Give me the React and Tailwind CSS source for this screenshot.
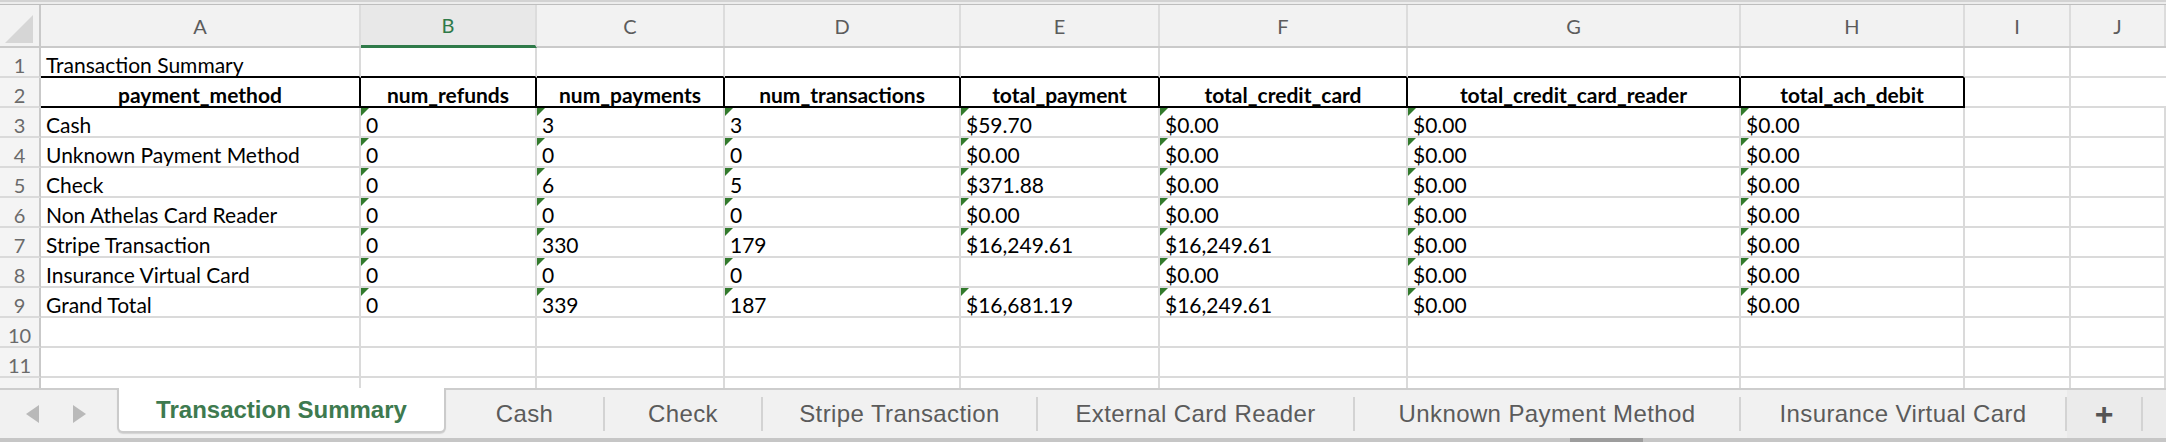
import React from 'react';

const GRID = "grid grid-cols-[41px_320px_176px_188px_236px_199px_248px_333px_224px_106px_1fr]";
const LETTERS = ['A', 'B', 'C', 'D', 'E', 'F', 'G', 'H', 'I', 'J'];
const HEADERS = ['payment_method', 'num_refunds', 'num_payments', 'num_transactions', 'total_payment', 'total_credit_card', 'total_credit_card_reader', 'total_ach_debit'];

// rows 3-9 of the sheet
const ROWS = [
    ['Cash', '0', '3', '3', '$59.70', '$0.00', '$0.00', '$0.00'],
    ['Unknown Payment Method', '0', '0', '0', '$0.00', '$0.00', '$0.00', '$0.00'],
    ['Check', '0', '6', '5', '$371.88', '$0.00', '$0.00', '$0.00'],
    ['Non Athelas Card Reader', '0', '0', '0', '$0.00', '$0.00', '$0.00', '$0.00'],
    ['Stripe Transaction', '0', '330', '179', '$16,249.61', '$16,249.61', '$0.00', '$0.00'],
    ['Insurance Virtual Card', '0', '0', '0', '', '$0.00', '$0.00', '$0.00'],
    ['Grand Total', '0', '339', '187', '$16,681.19', '$16,249.61', '$0.00', '$0.00'],
];

const TABS = [
    { name: 'Cash', w: 'w-[159px]' },
    { name: 'Check', w: 'w-[158px]' },
    { name: 'Stripe Transaction', w: 'w-[275px]' },
    { name: 'External Card Reader', w: 'w-[317px]' },
    { name: 'Unknown Payment Method', w: 'w-[386px]' },
    { name: 'Insurance Virtual Card', w: 'w-[326px]' },
];

function RowNum({ n }) {
    return (
        <div className="flex items-end justify-center h-[30px] pb-[1px] bg-[#f4f4f4] border-r-2 border-r-[#c9c9c9] border-b-2 border-b-[#dadada] text-[20px] text-[#6a6a6a]">
            <span className="leading-[20px]">{n}</span>
        </div>
    );
}

function Cell({ children, flag }) {
    return (
        <div className="relative flex items-end h-[30px] pl-[5px] pb-[1px] border-r-2 border-b-2 border-[#dadada] overflow-hidden">
            {flag && <span className="absolute left-0 top-0 w-0 h-0 border-t-[8px] border-r-[8px] border-t-[#327a2c] border-r-transparent" />}
            <span className="leading-[20px] whitespace-nowrap">{children}</span>
        </div>
    );
}

export default function App() {
    return (
        <div className="w-[2166px] h-[442px] flex flex-col overflow-hidden bg-white font-[Lato,sans-serif] text-[21px] text-black">
            {/* window chrome edge */}
            <div className="h-[2px] bg-[#d3d3d3]" />
            <div className="h-[2px] bg-[#ededed]" />
            <div className="h-[1px] bg-[#bebebe]" />

            {/* Column letters */}
            <div className={`${GRID} h-[43px] bg-[#f2f2f2] border-b-2 border-[#cacaca] text-[20px] text-[#5c5c5c]`}>
                <div className="flex items-end justify-end pr-[6px] pb-[3px] border-r-2 border-[#c9c9c9]">
                    <svg width="28" height="28" viewBox="0 0 28 28">
                        <polygon points="28,0 28,28 0,28" fill="#d6d6d6" />
                    </svg>
                </div>
                {LETTERS.map((l) => (
                    l === 'B' ? (
                        <div key={l} className="flex items-center justify-center bg-[#e8e8e8] border-r-2 border-[#dcdcdc] border-b-[3px] border-b-[#2f7a49] text-[#2f7a49] -mb-[2px]">{l}</div>
                    ) : (
                        <div key={l} className="flex items-center justify-center border-r-2 border-[#dcdcdc]">{l}</div>
                    )
                ))}
            </div>

            <div className="flex-1 overflow-hidden">
                {/* Row 1 */}
                <div className={GRID}>
                    <RowNum n={1} />
                    <div className="flex items-end h-[30px] pl-[5px] pb-[1px] border-r-2 border-r-[#dadada] border-b-2 border-b-black">
                        <span className="leading-[20px] whitespace-nowrap">Transaction Summary</span>
                    </div>
                    {HEADERS.slice(1).map((h) => (
                        <div key={h} className="h-[30px] border-r-2 border-r-[#dadada] border-b-2 border-b-black" />
                    ))}
                    <div className="h-[30px] border-r-2 border-b-2 border-[#dadada]" />
                    <div className="h-[30px] border-b-2 border-[#dadada]" />
                </div>

                {/* Row 2: bold header */}
                <div className={GRID}>
                    <RowNum n={2} />
                    {HEADERS.map((h) => (
                        <div key={h} className="flex items-end justify-center h-[30px] pb-[1px] border-r-2 border-b-2 border-black font-bold">
                            <span className="leading-[20px] whitespace-nowrap">{h}</span>
                        </div>
                    ))}
                    <div className="h-[30px] border-r-2 border-b-2 border-[#dadada]" />
                    <div className="h-[30px] border-b-2 border-[#dadada]" />
                </div>

                {/* Data rows */}
                {ROWS.map((r, i) => (
                    <div key={i} className={GRID}>
                        <RowNum n={i + 3} />
                        {r.map((v, j) => (
                            <Cell key={j} flag={j > 0 && v !== ''}>{v}</Cell>
                        ))}
                        <Cell />
                        <Cell />
                    </div>
                ))}

                {/* Empty rows */}
                {[10, 11, 12].map((n) => (
                    <div key={n} className={GRID}>
                        <RowNum n={n} />
                        {LETTERS.map((l) => <Cell key={l} />)}
                    </div>
                ))}
            </div>

            {/* Sheet tabs */}
            <div className="h-[54px] flex flex-col bg-[#f1f1f1] font-['Liberation_Sans',Arial,sans-serif]">
                <div className="flex-1 flex">
                    <div className="w-[117px] flex items-center gap-[34px] pl-[26px] border-t-2 border-[#cdcdcd]">
                        <svg width="13" height="18" viewBox="0 0 13 18"><polygon points="13,0 13,18 0,9" fill="#b9b9b9" /></svg>
                        <svg width="13" height="18" viewBox="0 0 13 18"><polygon points="0,0 0,18 13,9" fill="#b9b9b9" /></svg>
                    </div>
                    <div className="w-[329px] h-[45px] flex items-center justify-center bg-white border-x-2 border-b-2 border-[#cbcbcb] rounded-b-[6px] shadow-[0_1px_1px_rgba(0,0,0,0.12)] text-[24px] font-bold text-[#3e7a4f]">
                        Transaction Summary
                    </div>
                    {TABS.map((t) => (
                        <div key={t.name} className={`${t.w} flex items-center border-t-2 border-[#cdcdcd]`}>
                            <span className="flex-1 text-center text-[24px] tracking-[0.4px] text-[#5b5b5b] whitespace-nowrap">{t.name}</span>
                            <span className="w-[2px] h-[34px] bg-[#d3d3d3]" />
                        </div>
                    ))}
                    <div className="w-[76px] flex items-center bg-[#ebebeb] border-t-2 border-[#cdcdcd]">
                        <span className="flex-1 text-center text-[32px] font-bold leading-none text-[#555]">+</span>
                        <span className="w-[2px] h-[34px] bg-[#d3d3d3]" />
                    </div>
                    <div className="flex-1 bg-[#ebebeb] border-t-2 border-[#cdcdcd]" />
                </div>
                <div className="h-[4px] flex bg-[#c6c6c6]">
                    <div className="w-[1570px]" />
                    <div className="w-[73px] bg-[#9d9d9d]" />
                </div>
            </div>
        </div>
    );
}
